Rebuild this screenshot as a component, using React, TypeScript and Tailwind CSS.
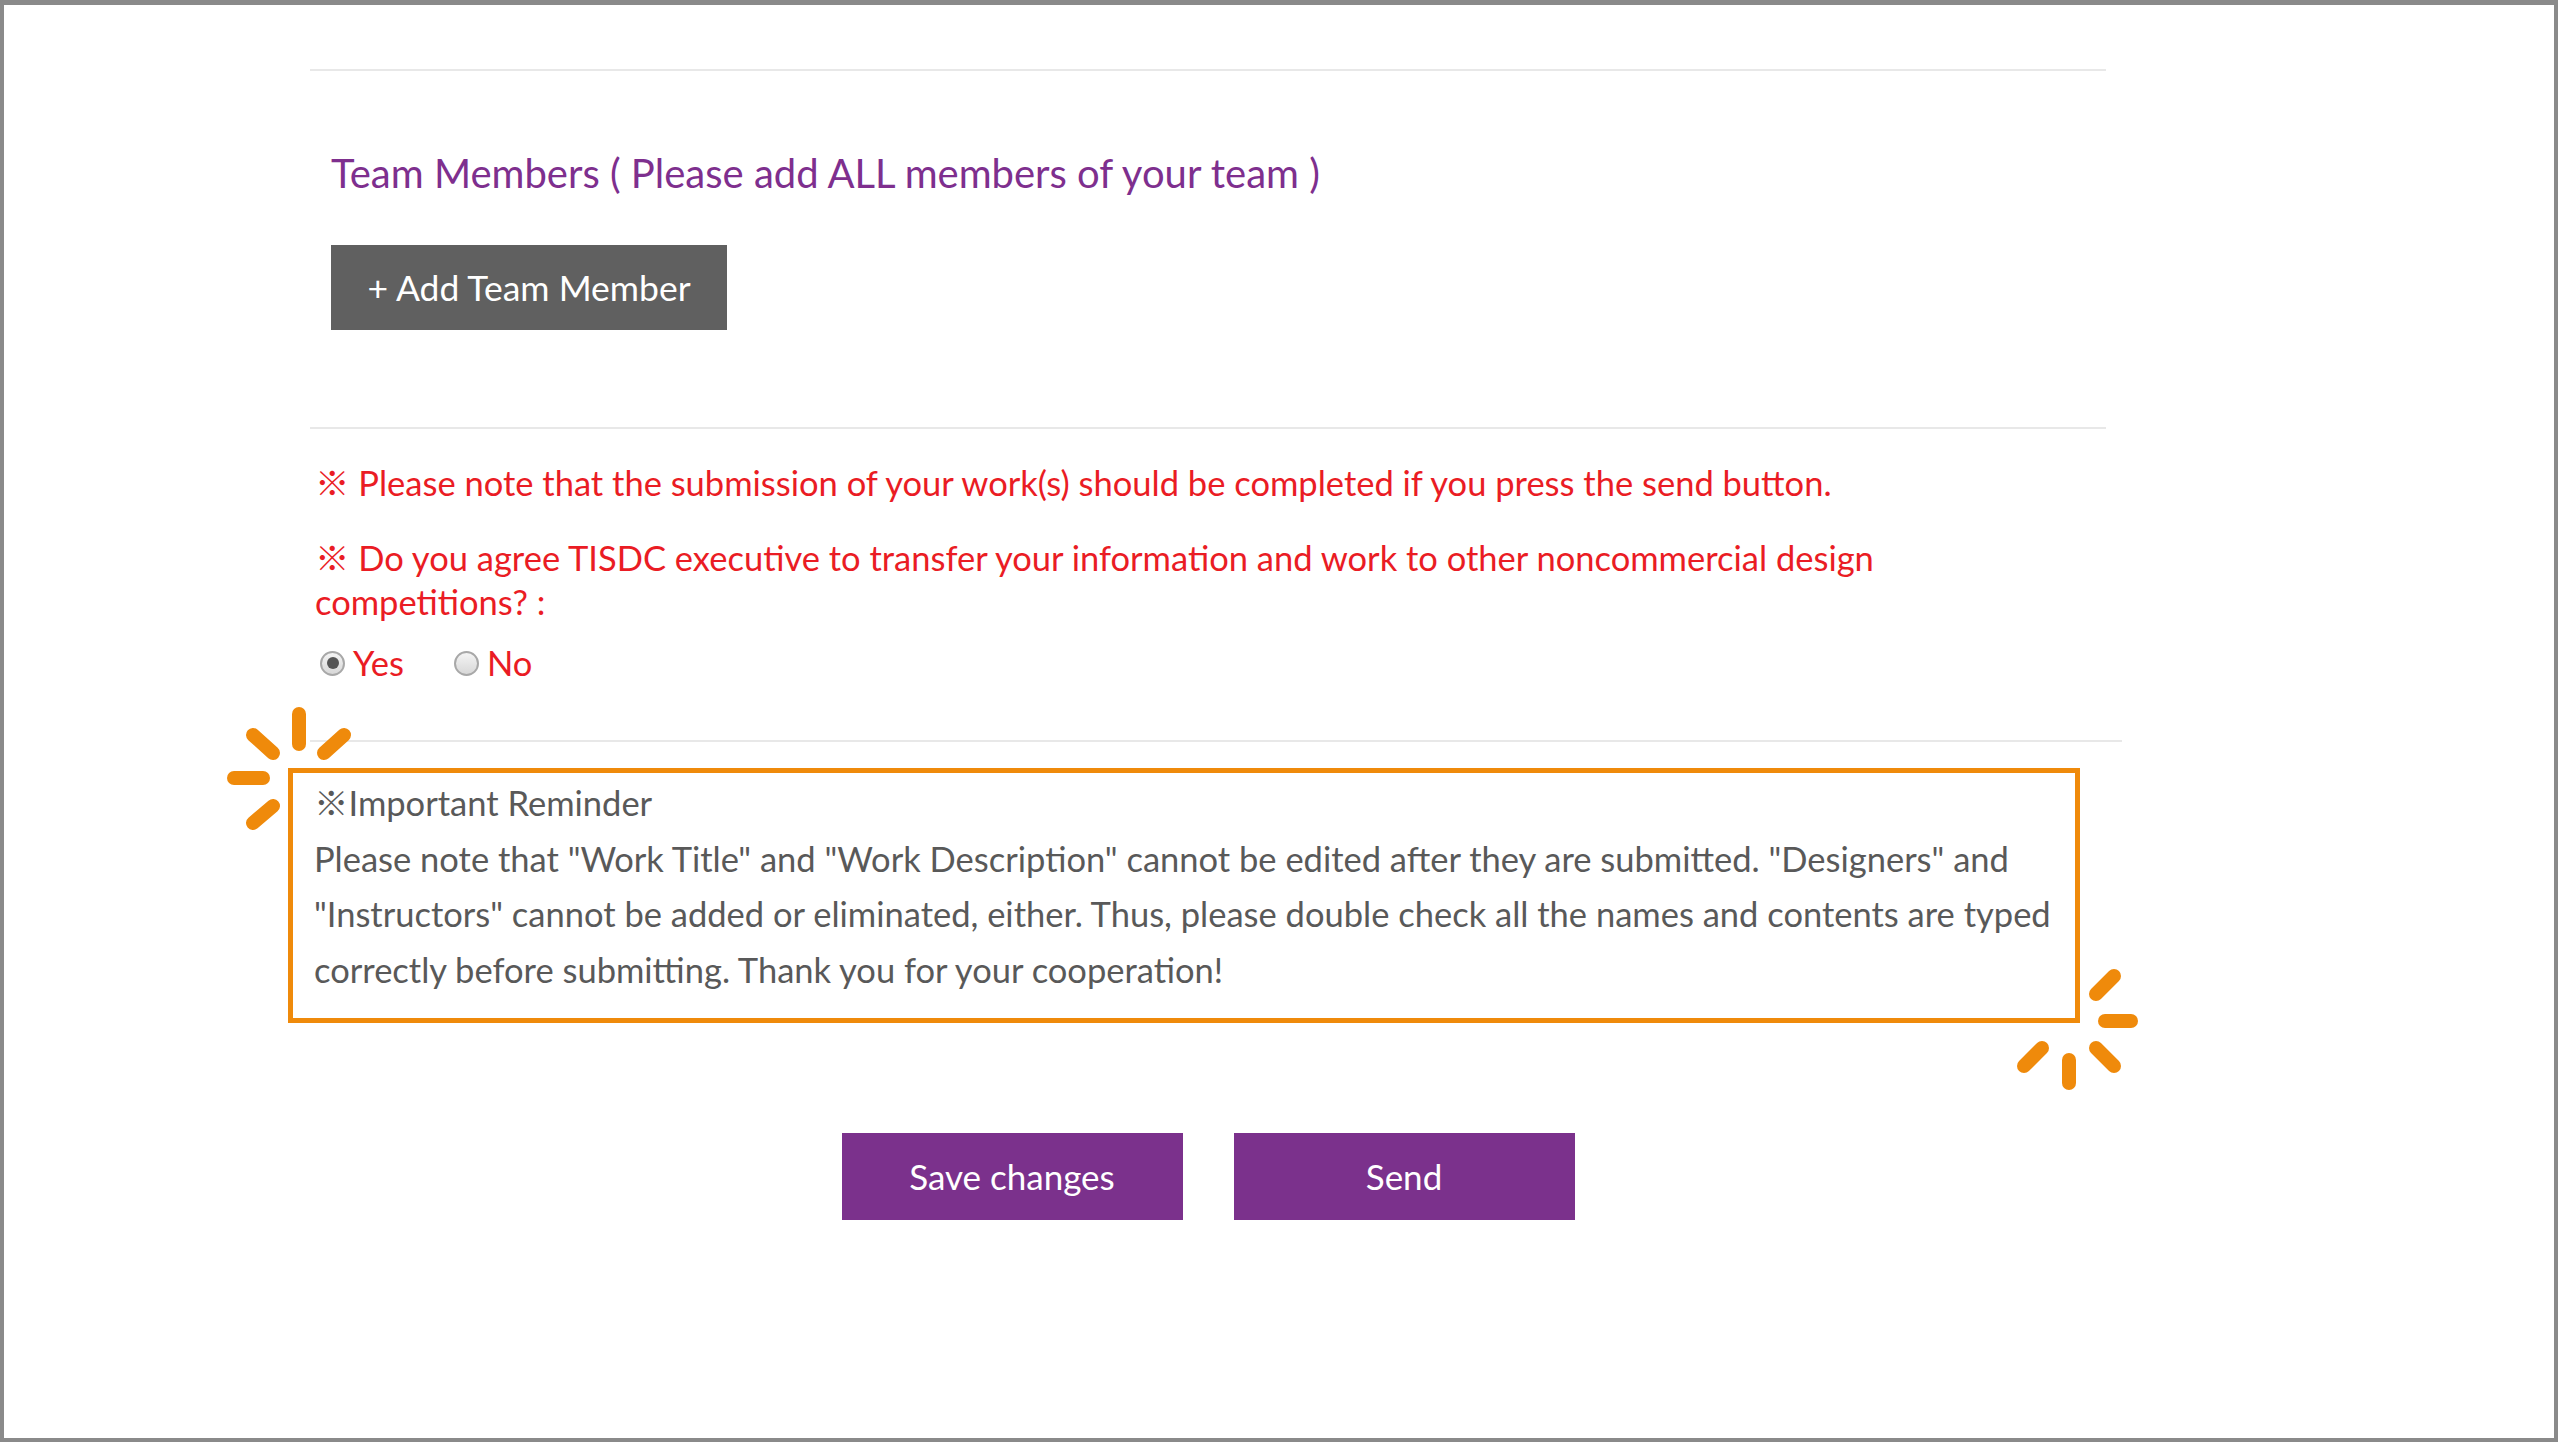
import React from "react";

const font = { fontFamily: 'Lato, "Noto Sans CJK TC", sans-serif' };

function Sparkle({ corner }: { corner: "tl" | "br" }) {
  // drawn in page coordinates, the viewBox crops the area round the box corner
  if (corner === "tl") {
    return (
      <svg
        className="absolute left-[-74px] top-[-77px]"
        width="140"
        height="145"
        viewBox="215 690 140 145"
      >
        <g stroke="#ef8a0b" strokeWidth="14" strokeLinecap="round">
          <line x1="295" y1="708" x2="295" y2="738" />
          <line x1="249" y1="729" x2="269" y2="747" />
          <line x1="320" y1="747" x2="340" y2="729" />
          <line x1="230" y1="772" x2="259" y2="772" />
          <line x1="249" y1="817" x2="269" y2="800" />
        </g>
      </svg>
    );
  }
  return (
    <svg
      className="absolute right-[-72px] bottom-[-80px]"
      width="140"
      height="135"
      viewBox="2010 965 140 135"
    >
      <g stroke="#ef8a0b" strokeWidth="14" strokeLinecap="round">
        <line x1="2099" y1="996" x2="2117" y2="978" />
        <line x1="2108" y1="1023" x2="2134" y2="1023" />
        <line x1="2099" y1="1050" x2="2117" y2="1068" />
        <line x1="2072" y1="1062" x2="2072" y2="1085" />
        <line x1="2045" y1="1050" x2="2027" y2="1068" />
      </g>
    </svg>
  );
}

function Radio({ checked, label }: { checked?: boolean; label: string }) {
  return (
    <label className="flex items-center gap-[8px]">
      <span className="w-[25px] h-[25px] rounded-full border-2 border-[#a8a8a8] bg-gradient-to-b from-[#f4f4f4] to-[#d8d8d8] flex items-center justify-center">
        {checked && <span className="w-[12px] h-[12px] rounded-full bg-[#555]" />}
      </span>
      <span>{label}</span>
    </label>
  );
}

export default function App() {
  return (
    <div
      className="w-[2558px] h-[1442px] border-4 border-t-[5px] border-[#8a8a8a] bg-white"
      style={font}
    >
      <div className="ml-[306px] w-[1796px] pt-[64px]">
        <div className="h-[2px] bg-[#e8e8e8]" />

        <h2 className="mt-[80px] ml-[21px] text-[40px] leading-[44px] text-[#7e2f8e]">
          Team Members ( Please add ALL members of your team )
        </h2>

        <button className="mt-[50px] ml-[21px] w-[396px] h-[85px] bg-[#606060] text-white text-[35.5px]">
          + Add Team Member
        </button>

        <div className="mt-[97px] h-[2px] bg-[#e8e8e8]" />

        <div className="px-[5px] text-[#ea1c24] text-[34.5px] leading-[44px]">
          <p className="mt-[32px]">
            ※ Please note that the submission of your work(s) should be completed if you press
            the send button.
          </p>
          <p className="mt-[31px] pr-[200px]">
            ※ Do you agree TISDC executive to transfer your information and work to other
            noncommercial design competitions? :
          </p>
          <div className="mt-[17px] flex items-center gap-[50px] pl-[5px]">
            <Radio checked label="Yes" />
            <Radio label="No" />
          </div>
        </div>

        <div className="mt-[55px] w-[1812px] h-[2px] bg-[#e8e8e8]" />

        <div className="relative mt-[26px] ml-[-22px] w-[1792px] border-[5px] border-[#ef8a0b] pl-[21px] pr-[9px] pt-[2px] pb-[21px] text-[#595959] text-[34.5px] leading-[55.5px]">
          <Sparkle corner="tl" />
          <p>※Important Reminder</p>
          <p>
            Please note that "Work Title" and "Work Description" cannot be edited after they are
            submitted. "Designers" and "Instructors" cannot be added or eliminated, either. Thus,
            please double check all the names and contents are typed correctly before submitting.
            Thank you for your cooperation!
          </p>
          <Sparkle corner="br" />
        </div>

        <div className="mt-[110px] flex justify-center gap-[51px]">
          <button className="w-[341px] h-[87px] bg-[#7b318c] text-white text-[35px]">
            Save changes
          </button>
          <button className="w-[341px] h-[87px] bg-[#7b318c] text-white text-[35px]">
            Send
          </button>
        </div>
      </div>
    </div>
  );
}
